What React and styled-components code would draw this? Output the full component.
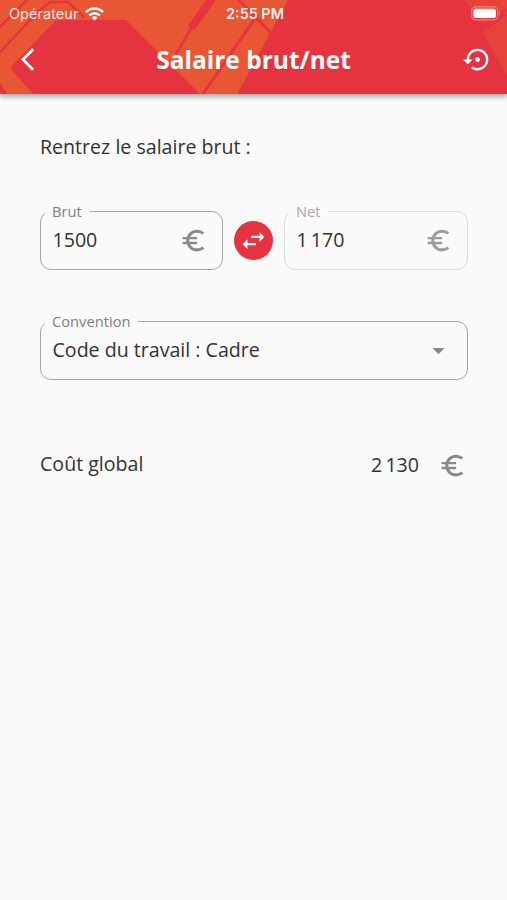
import {
    MdArrowBackIos,
    MdArrowDropDown,
    MdEuroSymbol,
    MdSettingsBackupRestore,
    MdSwapHoriz,
} from "react-icons/md";
import styled, { createGlobalStyle } from "styled-components";

const GlobalStyle = createGlobalStyle`
    * {
        box-sizing: border-box;
    }

    body {
        margin: 0;
        background: #fafafa;
        color: #333333;
        font-family: "Open Sans", "Noto Sans", sans-serif;
    }

    svg {
        display: block;
    }
`;

const Screen = styled.div`
    min-height: 900px;
    display: flex;
    flex-direction: column;
    background: #fafafa;
`;

const Header = styled.header`
    position: relative;
    height: 94px;
    background: #e5343f;
    color: #ffffff;
    box-shadow: 0 3px 5px rgba(0, 0, 0, 0.32);
`;

const Artwork = styled.svg`
    position: absolute;
    inset: 0;
`;

const StatusBar = styled.div`
    position: relative;
    display: grid;
    grid-template-columns: 1fr auto 1fr;
    align-items: center;
    height: 27px;
    padding: 0 6px 0 9px;
    font-family: Inter, "Liberation Sans", sans-serif;
    font-size: 14.4px;
`;

const Carrier = styled.div`
    display: flex;
    align-items: center;
    gap: 6px;
    letter-spacing: 0.1px;
    color: rgba(255, 255, 255, 0.88);
`;

const Clock = styled.div`
    font-size: 14.4px;
    font-weight: 600;
    color: rgba(255, 255, 255, 0.92);
`;

const Battery = styled.div`
    justify-self: end;
`;

const NavBar = styled.div`
    position: relative;
    display: grid;
    grid-template-columns: 48px 1fr 48px;
    align-items: center;
    height: 66px;
`;

const NavButton = styled.button`
    all: unset;
    display: flex;
    padding-left: ${({ inset }) => inset}px;
    padding-bottom: 1px;
    font-size: 29px;
`;

const Title = styled.h1`
    margin: 0;
    font-size: 24.5px;
    line-height: 32px;
    font-weight: 700;
    text-align: center;
`;

const Content = styled.main`
    padding: 39px 39px 0 40px;
    font-size: 19.6px;
    line-height: 28px;
`;

const Intro = styled.p`
    margin: 0;
`;

const SalaryRow = styled.div`
    display: flex;
    align-items: flex-end;
    justify-content: space-between;
    margin-top: 41px;
`;

const Field = styled.fieldset`
    min-width: 0;
    width: ${({ width }) => width || "100%"};
    height: 68px;
    margin: 0;
    padding: 0;
    border: 1.5px solid ${({ disabled }) => (disabled ? "#dcdcdc" : "#a6a6a6")};
    border-radius: 11px;
`;

const Legend = styled.legend`
    margin-left: 4px;
    padding: 0 8px 0 7px;
    font-size: 14.7px;
    line-height: 18px;
    color: ${({ muted }) => (muted ? "#a8a8a8" : "#808080")};
`;

const FieldBody = styled.div`
    display: flex;
    align-items: center;
    justify-content: space-between;
    height: 40px;
    padding: 0 14.5px 0 11.5px;
`;

const Unit = styled.span`
    display: flex;
    font-size: 29px;
    color: ${({ muted }) => (muted ? "#9c9c9c" : "#8a8a8a")};
`;

const SwapButton = styled.button`
    all: unset;
    display: flex;
    align-items: center;
    justify-content: center;
    width: 39px;
    height: 39px;
    margin-bottom: 10px;
    border-radius: 50%;
    background: #e5343f;
    color: #ffffff;
    font-size: 29px;
`;

const ConventionRow = styled.div`
    margin-top: 42px;
`;

const TotalRow = styled.div`
    display: flex;
    align-items: center;
    margin-top: 70px;
    padding-right: 1px;
    height: 30px;
`;

const TotalLabel = styled.span`
    padding-bottom: 2px;
`;

const Total = styled.span`
    margin-left: auto;
    margin-right: 19px;
    word-spacing: -2px;
`;

const Amount = styled.span`
    word-spacing: -2px;
`;

function HeaderArtwork() {
    return (
        <Artwork width="507" height="94" viewBox="0 0 507 94">
            <path
                d="M0 0H288L270 33L237 94H200L166 60L126 20H56L10 68L33 94H7L0 82Z"
                fill="#e95633"
            />
            <g fill="none" stroke="#e5343f">
                <path d="M0 27L27 0" strokeWidth="2.5" />
                <path d="M0 52L38 12L50 2H68L84 17" strokeWidth="2.5" />
                <path d="M214 -4L191 28" strokeWidth="8" />
                <path d="M193 25L176 54" strokeWidth="2.5" />
                <path d="M258 14L203 94" strokeWidth="3" />
                <path d="M237 -2L271 33" strokeWidth="3" />
            </g>
            <path d="M464 0H507V76L483 33L507 15L496 8L485 24Z" fill="#e74439" />
            <path d="M481 28L507 8" stroke="#e5343f" strokeWidth="2" />
        </Artwork>
    );
}

function WifiIcon() {
    return (
        <svg width="19" height="14" viewBox="0 0 19 14">
            <g fill="none" stroke="#ffffff" strokeWidth="2.5">
                <path d="M1 5.1C5.8 0.3 13.2 0.3 18 5.1" />
                <path d="M4.2 8.4C7.2 5.4 11.8 5.4 14.8 8.4" />
            </g>
            <path d="M6.6 10.5Q9.5 8 12.4 10.5L9.5 13.5Z" fill="#ffffff" />
        </svg>
    );
}

function BatteryIcon() {
    return (
        <svg width="30" height="15" viewBox="0 0 30 15">
            <rect
                x="0.7"
                y="0.9"
                width="26"
                height="13"
                rx="4"
                fill="none"
                stroke="#ffffff"
                strokeOpacity="0.35"
                strokeWidth="1.2"
            />
            <rect x="2.4" y="2.7" width="22.6" height="9.4" rx="2.3" fill="#ffffff" />
            <path d="M28 5.3Q30 7.4 28 9.5Z" fill="#ffffff" fillOpacity="0.45" />
        </svg>
    );
}

function AmountField(props) {
    const { label, value, muted, width } = props;

    return (
        <Field width={width} disabled={muted}>
            <Legend muted={muted}>{label}</Legend>
            <FieldBody>
                <Amount>{value}</Amount>
                <Unit muted={muted}>
                    <MdEuroSymbol />
                </Unit>
            </FieldBody>
        </Field>
    );
}

function App() {
    return (
        <Screen>
            <GlobalStyle />
            <Header>
                <HeaderArtwork />
                <StatusBar>
                    <Carrier>
                        Opérateur
                        <WifiIcon />
                    </Carrier>
                    <Clock>2:55 PM</Clock>
                    <Battery>
                        <BatteryIcon />
                    </Battery>
                </StatusBar>
                <NavBar>
                    <NavButton inset={21} aria-label="Retour">
                        <MdArrowBackIos />
                    </NavButton>
                    <Title>Salaire brut/net</Title>
                    <NavButton inset={4} aria-label="Réinitialiser">
                        <MdSettingsBackupRestore />
                    </NavButton>
                </NavBar>
            </Header>
            <Content>
                <Intro>Rentrez le salaire brut :</Intro>
                <SalaryRow>
                    <AmountField label="Brut" value="1500" width="183px" />
                    <SwapButton aria-label="Inverser">
                        <MdSwapHoriz />
                    </SwapButton>
                    <AmountField label="Net" value="1 170" width="184px" muted />
                </SalaryRow>
                <ConventionRow>
                    <Field>
                        <Legend>Convention</Legend>
                        <FieldBody>
                            Code du travail : Cadre
                            <Unit>
                                <MdArrowDropDown />
                            </Unit>
                        </FieldBody>
                    </Field>
                </ConventionRow>
                <TotalRow>
                    <TotalLabel>Coût global</TotalLabel>
                    <Total>2 130</Total>
                    <Unit>
                        <MdEuroSymbol />
                    </Unit>
                </TotalRow>
            </Content>
        </Screen>
    );
}

export default App;
